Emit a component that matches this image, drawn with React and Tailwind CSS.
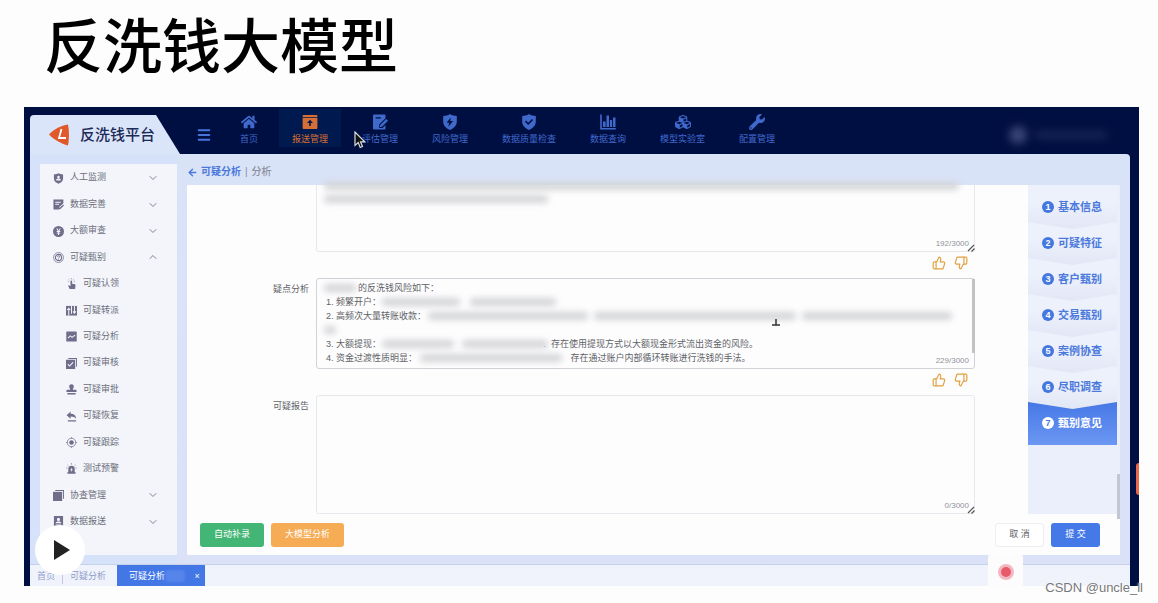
import { ArrowLeft, ChevronDown, ChevronUp, Menu, ThumbsDown, ThumbsUp } from "lucide-react"
import { FaCubes, FaHome, FaWrench } from "react-icons/fa"

const ReportIcon = () => (
    <svg viewBox="0 0 16 16" className="h-4 w-4" fill="currentColor">
        <path d="M1.5 1h13a1 1 0 0 1 .9 1v1.2H.6V2a1 1 0 0 1 .9-1z" />
        <path fillRule="evenodd" d="M.6 4h14.8V14a1 1 0 0 1-1 1H1.6a1 1 0 0 1-1-1zM8 5.800 5 9h2.200v3h1.600V9H11z" />
    </svg>
)

const AssessIcon = () => (
    <svg viewBox="0 0 16 16" className="h-4 w-4" fill="currentColor">
        <path fillRule="evenodd" d="M2 .5h10.500a1 1 0 0 1 1 1v2.700L7.200 10.600V14h3.400l2.900-2.900v3.400a1 1 0 0 1-1 1H2a1 1 0 0 1-1-1v-13a1 1 0 0 1 1-1zM3.600 3.200v1.400h5.200V3.200z" />
        <path d="m14.200 5 1.800 1.800-6 6-2.300.5.5-2.300z" />
    </svg>
)

const RiskIcon = () => (
    <svg viewBox="0 0 16 16" className="h-4 w-4" fill="currentColor">
        <path fillRule="evenodd" d="M8 0c2 1.400 4.300 1.900 6.800 2v5.600c0 4-2.700 6.800-6.800 8.400-4.100-1.600-6.800-4.400-6.800-8.400V2C3.700 1.900 6 1.400 8 0zm.8 3.500L4.600 8.700h2.600l-.8 4 4.600-5.600H8.200z" />
    </svg>
)

const QualityIcon = () => (
    <svg viewBox="0 0 16 16" className="h-4 w-4" fill="currentColor">
        <path fillRule="evenodd" d="M8 0c2 1.400 4.300 1.900 6.800 2v5.600c0 4-2.700 6.800-6.800 8.400-4.100-1.600-6.800-4.400-6.800-8.400V2C3.700 1.900 6 1.400 8 0zM5 6.600 3.900 7.800l3.300 3.300 5-5L11 4.900 7.200 8.700z" />
    </svg>
)

const ChartIcon = () => (
    <svg viewBox="0 0 16 16" className="h-4 w-4" fill="currentColor">
        <path d="M.2.5h1.600v13.500h14v1.500H.2zM3 7.500h2.600V13H3zM6.500 1.500H9V13H6.500zM9.900 6h2.200v7H9.900zM13 3.500h2.500V13H13z" />
    </svg>
)

const navItems = [
    { name: "首页", icon: <FaHome className="h-4 w-4" /> },
    { name: "报送管理", icon: <ReportIcon />, active: true },
    { name: "评估管理", icon: <AssessIcon /> },
    { name: "风险管理", icon: <RiskIcon /> },
    { name: "数据质量检查", icon: <QualityIcon /> },
    { name: "数据查询", icon: <ChartIcon /> },
    { name: "模型实验室", icon: <FaCubes className="h-4 w-4" /> },
    { name: "配置管理", icon: <FaWrench className="h-4 w-4" /> },
]

// 12x12 glyphs for the side menu
const glyphs = {
    shield: <path fillRule="evenodd" d="M6 .3c1.500.9 3.200 1.200 5 1.300v4.200c0 3-2 4.900-5 6-3-1.100-5-3-5-6V1.600C2.800 1.500 4.500 1.200 6 .3zM6 3a1.400 1.400 0 1 0 0 2.800A1.400 1.400 0 0 0 6 3zM3.600 8.300h4.800V7c0-.6-1-.9-2.400-.9S3.600 6.400 3.600 7z" />,
    edit: <path fillRule="evenodd" d="M.5.500h10.800v4L7 8.700v2.800H.5zM2.500 3v1h6V3zm0 2.300v1h4v-1zM11 6l1 1-3.800 3.900-1.400.4.400-1.400z" />,
    yen: <path fillRule="evenodd" d="M6 0a6 6 0 1 1 0 12A6 6 0 0 1 6 0zM3.500 2.800l1.700 2.700H4v1h1.400v.8H4v1h1.400v1.400h1.200V8.300H8v-1H6.600v-.8H8v-1H6.800l1.700-2.700H7.200L6 4.800 4.800 2.800z" />,
    target: (
        <g fill="none" stroke="currentColor">
            <circle cx="6" cy="6" r="5.400" strokeWidth=".8" />
            <circle cx="6" cy="6" r="3.400" strokeWidth="1.200" />
            <path d="M4.900 5.200c0-1.500 2.300-1.500 2.300 0 0 .8-1.200.8-1.200 1.700M6 7.500v.8" strokeWidth="1" />
        </g>
    ),
    tap: (
        <g>
            <path d="M4.900 3.500a.9.900 0 0 1 1.800 0v2.700l3 .7c.6.200.8.600.7 1.200L9.900 12H4L2.300 8.500l.8-.7 1.800 1z" />
            <path d="M2 3.500 3 4M2.900 1.500l.8.800M5.800.2v1.200M8.700 1.500l-.8.800M9.600 3.500l-1 .5" stroke="currentColor" strokeWidth=".8" />
        </g>
    ),
    transfer: (
        <g>
            <path d="M0 1h12v10.500H0z" />
            <path d="M3 11.500V4M1.400 5.500 3 3.500l1.600 2M6 1v8.500M9.200 1v7.500M7.600 7l1.600 2 1.600-2" fill="none" stroke="#f3f5fb" strokeWidth="1.100" />
        </g>
    ),
    trend: <path fillRule="evenodd" d="M1 .5h10a.7.700 0 0 1 .7.700v9.600a.7.700 0 0 1-.7.700H1a.7.700 0 0 1-.7-.7V1.200A.7.700 0 0 1 1 .5zM1.800 7.400l.8.700 2-2.200 2 1.700L10.300 4.800l-.8-.7-2.900 2.200-2-1.800z" />,
    check: (
        <g>
            <path d="M2.500 0H12v9.500h-1V1H2.500z" />
            <path fillRule="evenodd" d="M0 2h10v10H0zM2.500 6.400l-.9.800 2.300 2.300 4.300-4.200-.9-.9L3.900 7.800z" />
        </g>
    ),
    stamp: <path d="M6 .3a2.600 2.600 0 0 1 2.500 2.800C8.500 4.500 7.400 5 7.400 6.300h3.200c.6 0 .9.300.9.900v1.600H.5V7.200c0-.6.3-.9.900-.9h3.200C4.600 5 3.500 4.500 3.500 3.100A2.600 2.600 0 0 1 6 .3zM1.500 9.800h9v1.700h-9z" />,
    undo: <path d="M5 .5v2.400c3.800.1 5.800 1.900 6.200 5.900C9.700 6.900 8 6.100 5 6.100v2.400L.7 4.500zM2 10h9v1.500H2z" />,
    radar: (
        <g>
            <circle cx="6" cy="6" r="4.700" fill="none" stroke="currentColor" strokeWidth=".8" />
            <circle cx="6" cy="6" r="2.500" />
            <path d="M6 .2v1.500M6 10.300v1.500M.2 6h1.500M10.300 6h1.500" stroke="currentColor" strokeWidth=".8" />
        </g>
    ),
    alarm: (
        <g>
            <path fillRule="evenodd" d="M2.500 10V6.500a3.500 3.500 0 0 1 7 0V10h1v1.800h-9V10zM6.300 5 4.500 7.800h1.200L5.500 9.800l2-2.800H6.200z" />
            <path d="M.3 5.500h1.200M1.600 2.200l1 .9M6 .2v1.500M10.400 2.200l-1 .9M11.700 5.500h-1.200" stroke="currentColor" strokeWidth=".8" />
        </g>
    ),
    copy: (
        <g>
            <path d="M2.500 0H12v9.500h-1V1H2.500z" />
            <path d="M0 2h10v10H0z" />
        </g>
    ),
    contact: <path fillRule="evenodd" d="M1 0h10v12H1zM6 2a1.700 1.700 0 1 0 0 3.400A1.700 1.700 0 0 0 6 2zM3 8h6c0-1.400-1.200-2-3-2s-3 .6-3 2zm0 1.200v.9h6v-.9z" />,
}

const menu = [
    { name: "人工监测", icon: "shield", arrow: "down" },
    { name: "数据完善", icon: "edit", arrow: "down" },
    { name: "大额审查", icon: "yen", arrow: "down" },
    { name: "可疑甄别", icon: "target", arrow: "up" },
    { name: "可疑认领", icon: "tap" },
    { name: "可疑转派", icon: "transfer" },
    { name: "可疑分析", icon: "trend" },
    { name: "可疑审核", icon: "check" },
    { name: "可疑审批", icon: "stamp" },
    { name: "可疑恢复", icon: "undo" },
    { name: "可疑跟踪", icon: "radar" },
    { name: "测试预警", icon: "alarm" },
    { name: "协查管理", icon: "copy", arrow: "down" },
    { name: "数据报送", icon: "contact", arrow: "down" },
]

const steps = ["基本信息", "可疑特征", "客户甄别", "交易甄别", "案例协查", "尽职调查", "甄别意见"]

const gap = (n) => "\u3000".repeat(n)

const analysis = [
    gap(3) + "\u00a0\u00a0的反洗钱风险如下：",
    "1. 频繁开户：",
    "2. 高频次大量转账收款：",
    "",
    "3. 大额提现：" + gap(18) + "\u00a0\u00a0.\u00a0\u00a0存在使用提现方式以大额现金形式流出资金的风险。",
    "4. 资金过渡性质明显：" + gap(17) + "\u00a0\u00a0存在通过账户内部循环转账进行洗钱的手法。",
    "5.",
].join("\n")

function Header() {
    return (
        <header className="flex h-[47px] items-end pl-[6px]">
            <div className="flex h-[39px] w-[150px] shrink-0 items-center rounded-tl bg-[#dbe5fa] pl-[18px] [clip-path:polygon(0_0,126px_0,150px_100%,0_100%)]">
                <svg viewBox="0 0 22 22" className="h-[22px] w-[22px]">
                    <path d="M1 10.500C6 5 13 1.500 20 .5c1.300 6.500 1.300 14.500 0 21C13 19.500 6 16 1 10.500z" fill="#e0592b" />
                    <path d="M13.500 5 11 14h7" fill="none" stroke="#fff" strokeWidth="1.800" />
                </svg>
                <h2 className="ml-[10px] text-[15px] leading-5 font-medium whitespace-nowrap text-[#1b2a57]">反洗钱平台</h2>
            </div>
            <button type="button" aria-label="菜单" className="mb-[11px] ml-4 text-[#4474dc]">
                <Menu className="h-4 w-4" strokeWidth={3} />
            </button>
            <nav className="mb-[7px] ml-[15px] flex gap-2">
                {navItems.map((item) => (
                    <a
                        key={item.name}
                        href="#"
                        className={`flex h-[38px] flex-col items-center px-[13px] pt-[5px] text-[9px] leading-[14px] whitespace-nowrap ${
                            item.active ? "bg-[#00194f] text-[#d56f35]" : "text-[#4069cc]"
                        }`}
                    >
                        {item.icon}
                        <span className="mt-[2px]">{item.name}</span>
                    </a>
                ))}
            </nav>
            <div className="mr-8 mb-[10px] ml-auto flex items-center gap-2 blur-[4px]">
                <div className="h-[18px] w-[18px] rounded-full bg-[#3a4576]"></div>
                <div className="h-[6px] w-[72px] rounded bg-[#1d2a5c]"></div>
            </div>
        </header>
    )
}

function Sidebar() {
    return (
        <aside className="bg-[#d5e2fa] pt-[10px] pb-[9px] pl-[10px]">
            <nav className="h-full w-[137px] bg-[#f3f5fb] pt-[1px]">
                <ul className="grid h-[370px] auto-rows-fr">
                    {menu.map((item) => (
                        <li key={item.name} className="grid">
                            <a
                                href="#"
                                className={`flex items-center pr-[18px] text-[9px] text-[#6d6e7a] ${item.arrow ? "pl-[13px]" : "pl-[26px]"}`}
                            >
                                <svg viewBox="0 0 12 12" className="h-[11px] w-[11px] text-[#6f6d8a]" fill="currentColor">
                                    {glyphs[item.icon]}
                                </svg>
                                <span className="ml-[6px]">{item.name}</span>
                                {item.arrow === "down" && <ChevronDown className="ml-auto h-3 w-3 text-[#85858d]" strokeWidth={2} />}
                                {item.arrow === "up" && <ChevronUp className="ml-auto h-3 w-3 text-[#85858d]" strokeWidth={2} />}
                            </a>
                        </li>
                    ))}
                </ul>
            </nav>
        </aside>
    )
}

function Grip() {
    return (
        <svg viewBox="0 0 8 8" className="absolute right-0 bottom-0 h-2 w-2" stroke="#555" strokeWidth="1.200">
            <path d="M1 7 7 1M4.500 7.500l3-3" />
        </svg>
    )
}

function Counter({ children }) {
    return <span className="absolute right-[6px] bottom-[2px] text-[8px] leading-3 text-[#909399]">{children}</span>
}

function Rating() {
    return (
        <div className="flex h-[26px] items-center justify-end gap-2 pr-[7px] pb-1 text-[#e2a03f]">
            <button type="button" aria-label="有用">
                <ThumbsUp className="h-[14px] w-[14px]" strokeWidth={2} />
            </button>
            <button type="button" aria-label="无用">
                <ThumbsDown className="h-[14px] w-[14px]" strokeWidth={2} />
            </button>
        </div>
    )
}

function Smudge({ className }) {
    return <span className={`pointer-events-none absolute h-2 rounded-sm bg-[#d3d4d6] blur-[3px] ${className}`}></span>
}

function Form() {
    return (
        <form className="grid min-w-0 flex-1 grid-cols-[122px_1fr] content-start gap-x-[7px] pr-[53px] text-[9px] text-[#606266]">
            <span></span>
            <div>
                <div className="relative">
                    <textarea
                        aria-label="案例描述"
                        className="block h-[67px] w-full resize-none rounded-b-[3px] border border-t-0 border-[#e6e8ee] bg-transparent"
                    />
                    <Smudge className="-top-[3px] left-2 w-[635px]" />
                    <Smudge className="top-[10px] left-2 w-[224px]" />
                    <Counter>192/3000</Counter>
                    <Grip />
                </div>
                <Rating />
            </div>

            <label htmlFor="analysis" className="pt-1 text-right leading-[14px]">疑点分析</label>
            <div>
                <div className="relative">
                    <textarea
                        id="analysis"
                        defaultValue={analysis}
                        className="block h-[91px] w-full resize-none overflow-hidden rounded-[3px] border border-[#d0d2d7] bg-transparent px-[9px] pt-[2px] leading-[14px]"
                    />
                    <Smudge className="top-[6px] left-2 w-8" />
                    <Smudge className="top-[20px] left-[66px] w-[78px]" />
                    <Smudge className="top-[20px] left-[154px] w-[86px]" />
                    <Smudge className="top-[34px] left-[112px] w-[160px]" />
                    <Smudge className="top-[34px] left-[278px] w-[202px]" />
                    <Smudge className="top-[34px] left-[486px] w-[150px]" />
                    <Smudge className="top-[48px] left-2 w-3" />
                    <Smudge className="top-[62px] left-[66px] w-[72px]" />
                    <Smudge className="top-[62px] left-[146px] w-[86px]" />
                    <Smudge className="top-[76px] left-[104px] w-[142px]" />
                    <Counter>229/3000</Counter>
                    <span className="absolute top-[1px] right-0 h-[74px] w-[3px] bg-[#c2c2c4]"></span>
                    {/* text caret pointer */}
                    <svg viewBox="0 0 8 16" className="absolute top-8 left-[456px] h-4 w-2" fill="none" stroke="#333">
                        <path d="M4 9v6M0 15h8" strokeWidth="1.500" />
                    </svg>
                </div>
                <Rating />
            </div>

            <label htmlFor="report" className="pt-1 text-right leading-[14px]">可疑报告</label>
            <div className="relative">
                <textarea
                    id="report"
                    className="block h-[119px] w-full resize-none rounded-[3px] border border-[#e6e8ee] bg-transparent px-[9px]"
                />
                <Counter>0/3000</Counter>
                <Grip />
            </div>
        </form>
    )
}

function Steps() {
    return (
        <ol className="flex w-[92px] shrink-0 flex-col bg-[#ebeffb] pr-[3px]">
            {steps.map((step, i) => {
                const active = i === steps.length - 1
                return (
                    <li
                        key={step}
                        style={{ zIndex: steps.length - i }}
                        className={`-mb-2 h-[44px] ${
                            active
                                ? "bg-linear-to-b from-[#4577e6] to-[#6c97f2] text-white"
                                : "bg-linear-to-b from-[#edf1fc] from-40% to-[#e2e7f6] text-[#4b79dc] [clip-path:polygon(0_0,100%_0,100%_37px,50%_100%,0_37px)]"
                        }`}
                    >
                        <a href="#" className="flex h-full items-center gap-1 pl-[14px] text-[11px] leading-4 font-bold">
                            <span
                                className={`flex h-3 w-3 items-center justify-center rounded-full text-[9px] leading-3 ${
                                    active ? "bg-white text-[#4b79dc]" : "bg-[#4577e0] text-white"
                                }`}
                            >
                                {i + 1}
                            </span>
                            {step}
                        </a>
                    </li>
                )
            })}
        </ol>
    )
}

function Workspace() {
    return (
        <main className="min-w-0 flex-1 px-[10px] pb-[9px]">
            <div className="flex h-[31px] items-center gap-1 pt-[5px] text-[10px] leading-4 text-[#8c8f98]">
                <a href="#" className="flex items-center gap-[3px] font-bold text-[#4a78dd]">
                    <ArrowLeft className="h-[11px] w-[11px]" strokeWidth={3} />
                    可疑分析
                </a>
                <span>|</span>
                <span className="font-medium">分析</span>
            </div>
            <div className="relative bg-[#fdfdfe]">
                <div className="flex h-[329px]">
                    <Form />
                    <Steps />
                </div>
                <div className="flex h-[41px] items-center gap-[7px] pr-5 pl-[13px] text-[9px]">
                    <button type="button" className="h-6 rounded-[3px] bg-[#43b574] px-[14px] text-white">自动补录</button>
                    <button type="button" className="h-6 rounded-[3px] bg-[#f6ac55] px-[14px] text-white">大模型分析</button>
                    <button type="button" className="ml-auto h-6 w-[49px] rounded-[3px] border border-[#eceef2] bg-white text-[#606266]">取 消</button>
                    <button type="submit" className="h-6 w-[49px] rounded-[3px] bg-[#4679e8] text-white">提 交</button>
                </div>
                <span className="absolute right-0 bottom-9 h-[45px] w-[3px] bg-[#c3c7d2]"></span>
            </div>
        </main>
    )
}

function TabBar() {
    return (
        <div className="flex h-[22px] items-center border-t border-[#c6d1ea] bg-[#f0f3fb] text-[9px] leading-4 text-[#8f9cc9]">
            <a href="#" className="border-r border-[#c3c9dc] px-[7px]">首页</a>
            <a href="#" className="px-[7px]">可疑分析</a>
            <div className="ml-1 flex h-full items-center bg-[#4477e6] pr-1 pl-3 text-white">
                <a href="#">可疑分析</a>
                <span className="h-3 w-5 rounded bg-[#5584ea] blur-[1px]"></span>
                <button type="button" aria-label="关闭" className="ml-2 w-2">×</button>
            </div>
        </div>
    )
}

export default function App() {
    return (
        <div className="min-h-screen bg-[#fdfdfd] pr-[19px] pl-6 font-['Liberation_Sans','Noto_Sans_CJK_SC',sans-serif]">
            <h1 className="flex h-[107px] items-start pt-[10px] pl-5 text-[59px] leading-[76px] font-medium text-black">反洗钱大模型</h1>
            <div className="relative bg-[#000f41]">
                <Header />
                <div className="mr-[9px] ml-[6px]">
                    <div className="flex rounded-tr bg-linear-to-b from-[#d9e3f8] to-[#dbe2f7]">
                        <Sidebar />
                        <Workspace />
                    </div>
                    <TabBar />
                </div>

                {/* mouse pointer */}
                <svg viewBox="0 0 12 18" className="absolute top-6 left-[330px] h-[18px] w-3">
                    <path d="M1 1v13.500l3.200-2.900 2 4.900 2.300-1-2-4.700h4.200z" fill="#111" stroke="#ddd" strokeWidth="1.200" />
                </svg>

                <button
                    type="button"
                    aria-label="播放"
                    className="absolute bottom-[11px] left-[11px] flex h-[50px] w-[50px] items-center justify-center rounded-full bg-white"
                >
                    <svg viewBox="0 0 16 20" className="ml-[3px] h-5 w-4">
                        <path d="M0 0v20l16-10z" fill="#222" />
                    </svg>
                </button>

                <div className="absolute right-[116px] bottom-0 flex h-8 w-[35px] items-center justify-center rounded-t-[4px] bg-[#fcfcfd] pt-1">
                    <span className="h-4 w-4 rounded-full border-[3px] border-[#f3b9c2] bg-[#e8596a]"></span>
                </div>

                <div className="absolute right-0 bottom-[91px] h-8 w-[3px] rounded-l-sm bg-[#e8694a]"></div>

                <span className="absolute -right-1 -bottom-[10px] text-[13px] leading-4 whitespace-nowrap text-[#77787c] [text-shadow:0_0_2px_#fff]">
                    CSDN @uncle_ll
                </span>
            </div>
        </div>
    )
}
